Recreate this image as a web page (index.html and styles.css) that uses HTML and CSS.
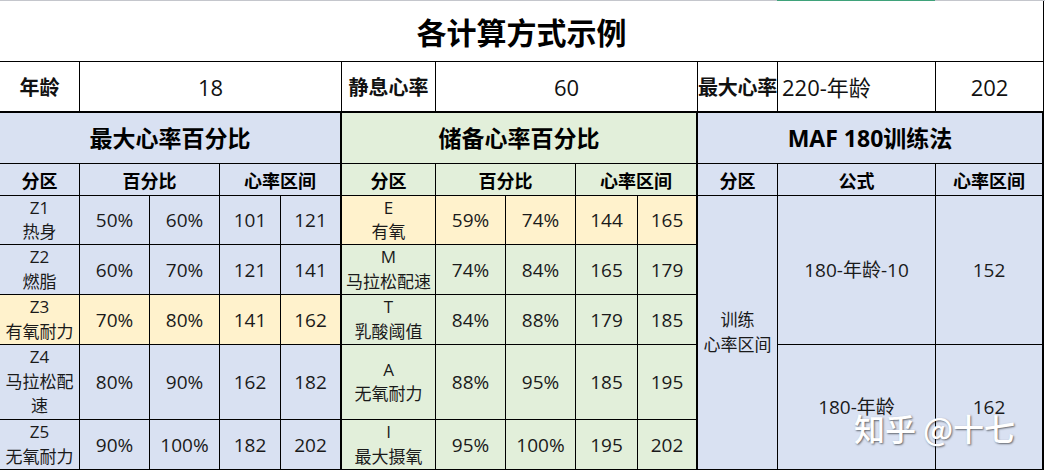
FILE: index.html
```html
<!DOCTYPE html>
<html lang="zh-CN">
<head>
<meta charset="utf-8">
<title>各计算方式示例</title>
<link rel="stylesheet" href="styles.css">
</head>
<body>
<div class="page">
  <div class="colbar"><span class="cb-gray cb-left"></span><span class="cb-green"></span><span class="cb-gray cb-right"></span></div>
  <div class="sheet">
    <div class="c title">各计算方式示例</div>

    <div class="c lab">年龄</div>
    <div class="c val span4">18</div>
    <div class="c lab">静息心率</div>
    <div class="c val span4">60</div>
    <div class="c lab nowrap">最大心率</div>
    <div class="c val left">220-年龄</div>
    <div class="c val edge">202</div>

    <div class="c sec blue span5 thick">最大心率百分比</div>
    <div class="c sec green span5 thick">储备心率百分比</div>
    <div class="c sec blue span3 edge2">MAF 180训练法</div>

    <div class="c hd blue">分区</div>
    <div class="c hd blue span2">百分比</div>
    <div class="c hd blue span2 thick">心率区间</div>
    <div class="c hd green">分区</div>
    <div class="c hd green span2">百分比</div>
    <div class="c hd green span2 thick">心率区间</div>
    <div class="c hd blue">分区</div>
    <div class="c hd blue">公式</div>
    <div class="c hd blue edge2">心率区间</div>

    <div class="c zone blue">Z1<br>热身</div>
    <div class="c num blue">50%</div>
    <div class="c num blue">60%</div>
    <div class="c num blue">101</div>
    <div class="c num blue thick">121</div>
    <div class="c zone yellow">E<br>有氧</div>
    <div class="c num yellow">59%</div>
    <div class="c num yellow">74%</div>
    <div class="c num yellow">144</div>
    <div class="c num yellow thick">165</div>

    <div class="c zone blue">Z2<br>燃脂</div>
    <div class="c num blue">60%</div>
    <div class="c num blue">70%</div>
    <div class="c num blue">121</div>
    <div class="c num blue thick">141</div>
    <div class="c zone green">M<br>马拉松配速</div>
    <div class="c num green">74%</div>
    <div class="c num green">84%</div>
    <div class="c num green">165</div>
    <div class="c num green thick">179</div>

    <div class="c zone yellow">Z3<br>有氧耐力</div>
    <div class="c num yellow">70%</div>
    <div class="c num yellow">80%</div>
    <div class="c num yellow">141</div>
    <div class="c num yellow thick">162</div>
    <div class="c zone green">T<br>乳酸阈值</div>
    <div class="c num green">84%</div>
    <div class="c num green">88%</div>
    <div class="c num green">179</div>
    <div class="c num green thick">185</div>

    <div class="c zone blue">Z4<br>马拉松配速</div>
    <div class="c num blue">80%</div>
    <div class="c num blue">90%</div>
    <div class="c num blue">162</div>
    <div class="c num blue thick">182</div>
    <div class="c zone green">A<br>无氧耐力</div>
    <div class="c num green">88%</div>
    <div class="c num green">95%</div>
    <div class="c num green">185</div>
    <div class="c num green thick">195</div>

    <div class="c zone blue">Z5<br>无氧耐力</div>
    <div class="c num blue">90%</div>
    <div class="c num blue">100%</div>
    <div class="c num blue">182</div>
    <div class="c num blue thick">202</div>
    <div class="c zone green">I<br>最大摄氧</div>
    <div class="c num green">95%</div>
    <div class="c num green">100%</div>
    <div class="c num green">195</div>
    <div class="c num green thick">202</div>

    <div class="c zone blue maf-zone">训练<br>心率区间</div>
    <div class="c num blue maf-f1">180-年龄-10</div>
    <div class="c num blue edge2 maf-v1">152</div>
    <div class="c num blue maf-f2">180-年龄</div>
    <div class="c num blue edge2 maf-v2">162</div>
  </div>
  <div class="watermark">知乎 @十七</div>
</div>
</body>
</html>
```

FILE: styles.css
```css
html, body {
  margin: 0;
  padding: 0;
  background: #ffffff;
}

.page {
  position: relative;
  width: 1045px;
  height: 470px;
  overflow: hidden;
  font-family: "Open Sans", "Noto Sans CJK SC", sans-serif;
  color: #111;
}

.colbar {
  display: flex;
  height: 1px;
}
.cb-gray { background: #c4c6cc; }
.cb-left { width: 777px; }
.cb-green { width: 158px; background: #3fa27a; }
.cb-right { flex: 1; }

.sheet {
  display: grid;
  grid-template-columns: 80px 70px 70px 61px 61px 94px 70px 70px 62px 60px 80px 158px 108px;
  grid-template-rows: 61px 51px 51px 32px 49px 50px 50px 75px 50px;
}

.c {
  box-sizing: border-box;
  border-right: 1px solid #000;
  border-bottom: 1px solid #000;
  display: flex;
  flex-direction: column;
  align-items: center;
  justify-content: center;
  text-align: center;
  min-width: 0;
}

.title {
  grid-column: 1 / -1;
  font-family: "Noto Sans CJK SC", sans-serif;
  font-weight: 700;
  font-size: 30px;
  line-height: 36px;
  color: #000;
}

.lab {
  font-family: "Noto Sans CJK SC", sans-serif;
  font-weight: 700;
  font-size: 20px;
  line-height: 26px;
  border-bottom-width: 2px;
  color: #111;
}
.nowrap { white-space: nowrap; letter-spacing: -0.3px; }

.val {
  font-size: 22px;
  line-height: 28px;
  border-bottom-width: 2px;
  color: #111;
}
.val.left { align-items: flex-start; padding-left: 4px; }
.span4 { grid-column: span 4; }
.span5 { grid-column: span 5; }
.span3 { grid-column: span 3; }
.span2 { grid-column: span 2; }

.sec {
  font-family: "Open Sans", "Noto Sans CJK SC", sans-serif;
  font-weight: 700;
  font-size: 23px;
  line-height: 30px;
  color: #000;
}

.hd {
  font-family: "Noto Sans CJK SC", sans-serif;
  font-weight: 700;
  font-size: 18px;
  line-height: 24px;
  color: #000;
}

.zone {
  font-size: 17px;
  line-height: 24.5px;
  color: #1a1a1a;
}

.num {
  font-size: 19px;
  line-height: 26px;
  color: #1a1a1a;
}

.thick { border-right-width: 2px; }
.edge { border-right-color: #000; }
.edge2 { border-right-width: 2px; }

.blue { background: #d9e1f2; }
.green { background: #e2efda; }
.yellow { background: #fff2cc; }

.maf-zone { grid-column: 11; grid-row: 5 / 10; }
.maf-f1 { grid-column: 12; grid-row: 5 / 8; }
.maf-v1 { grid-column: 13; grid-row: 5 / 8; }
.maf-f2 { grid-column: 12; grid-row: 8 / 10; }
.maf-v2 { grid-column: 13; grid-row: 8 / 10; }

.watermark {
  position: absolute;
  left: 854px;
  top: 408px;
  font-family: "Noto Sans CJK SC", sans-serif;
  font-weight: 500;
  font-size: 31px;
  line-height: 40px;
  color: #ffffff;
  text-shadow: 1px 1px 2px rgba(0, 0, 0, 0.55);
  white-space: nowrap;
}
```
